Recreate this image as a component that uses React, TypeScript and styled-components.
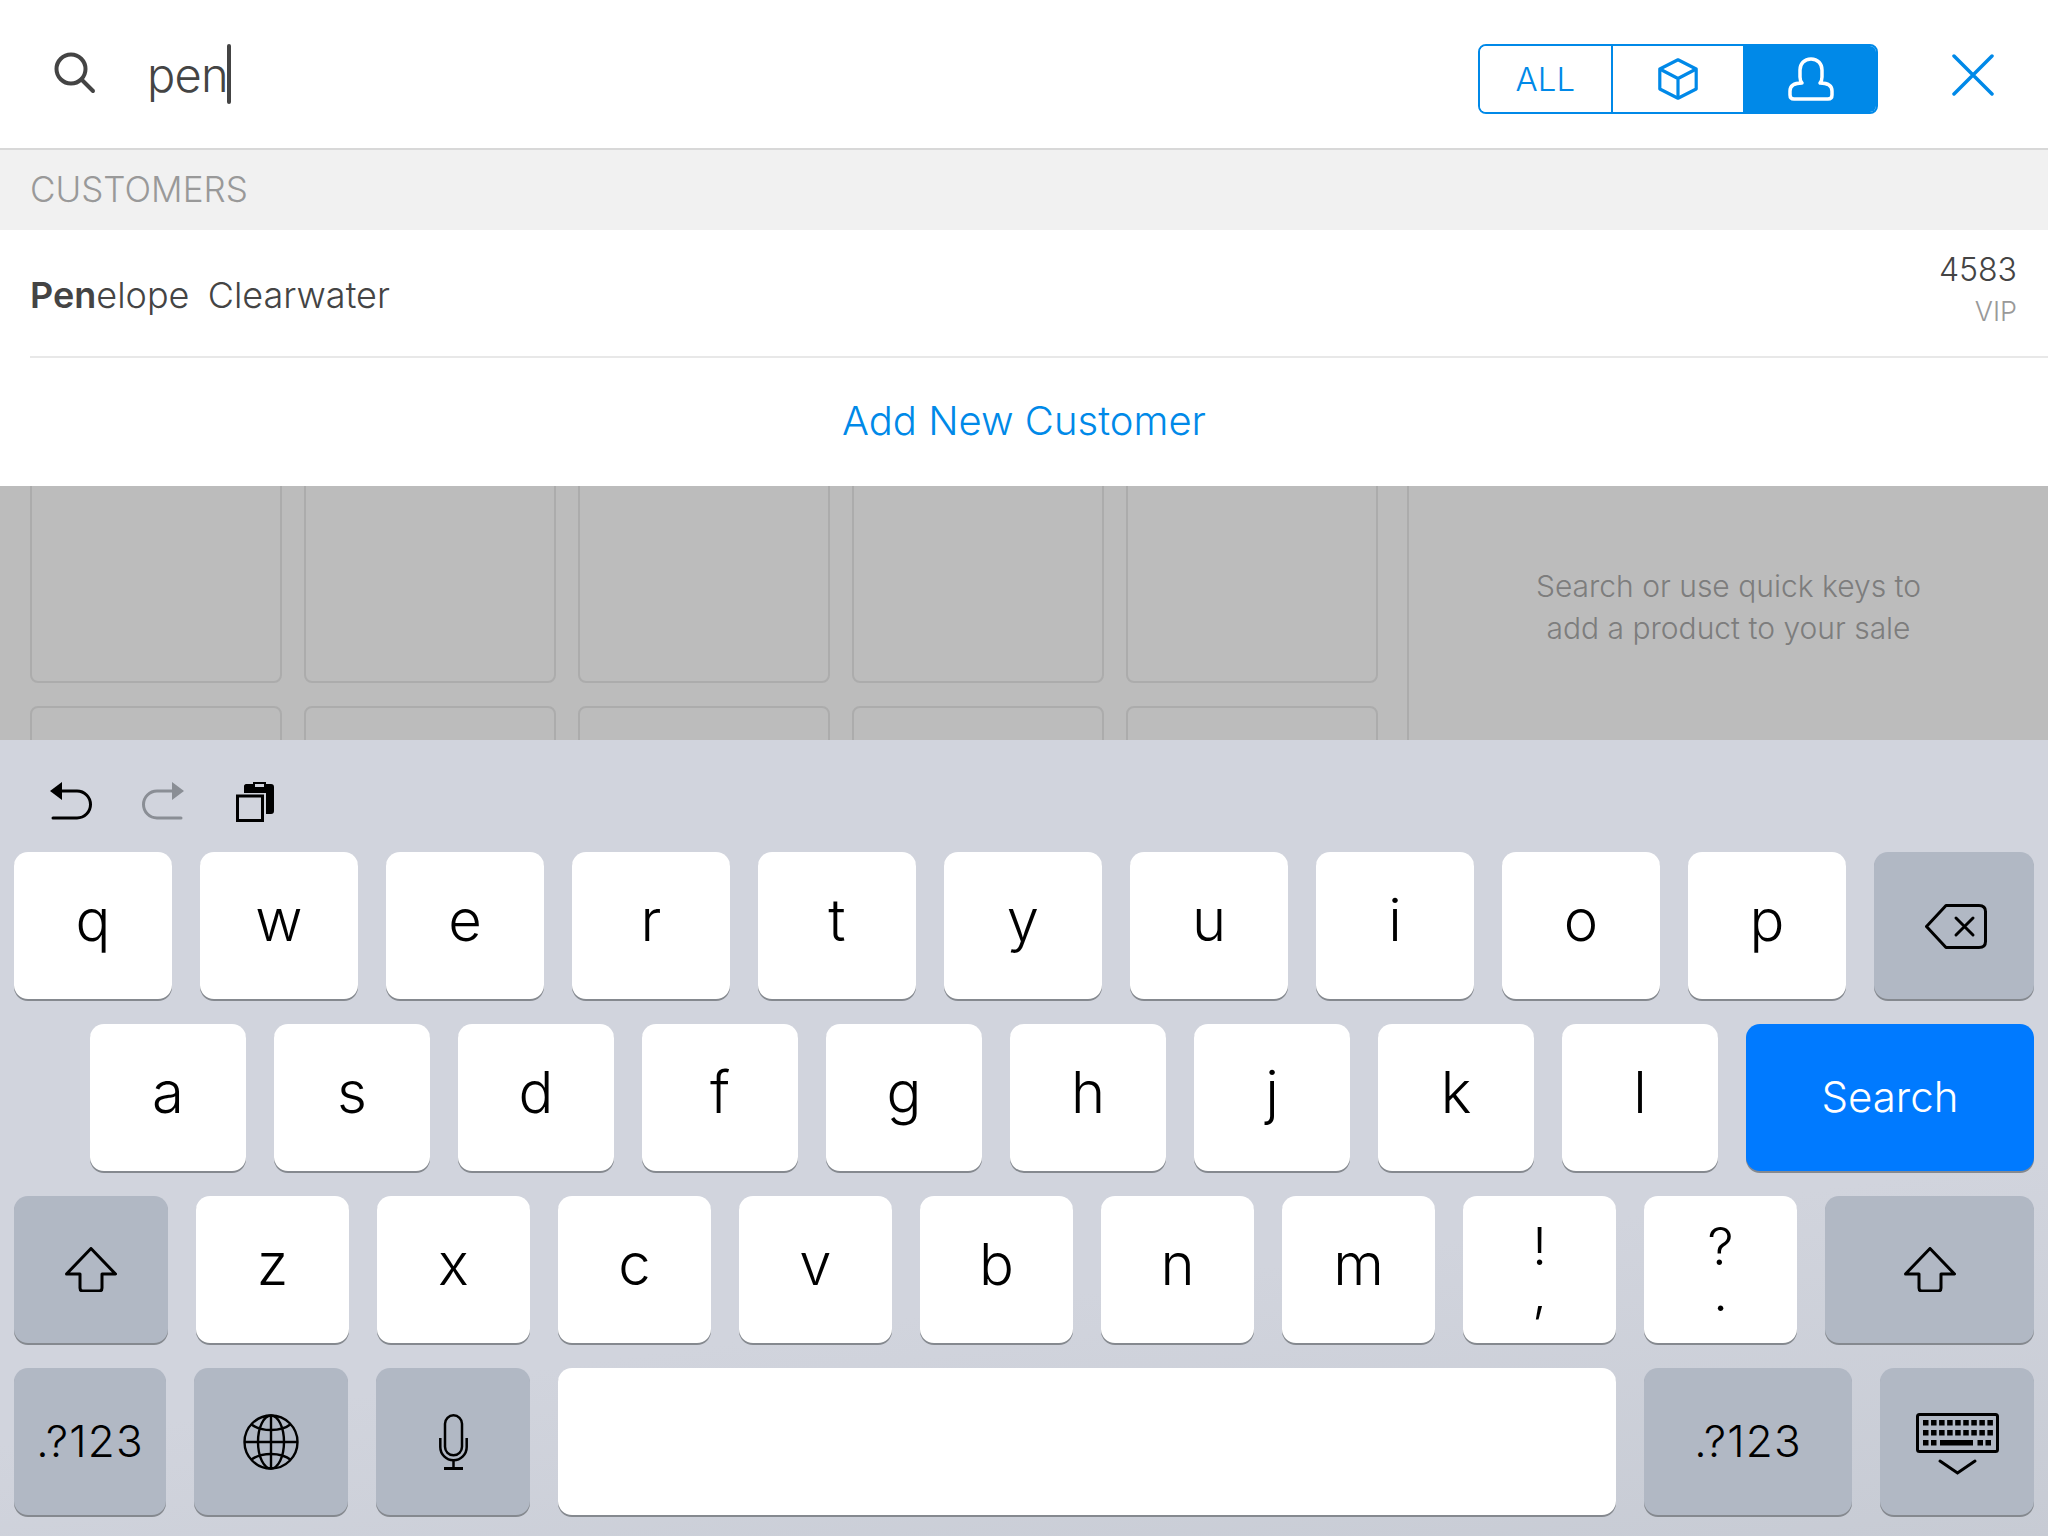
import styled, { createGlobalStyle } from "styled-components";

const BLUE = "#0089e8";

const Global = createGlobalStyle`
  html, body { margin: 0; padding: 0; background: #fff; }
  #root { width: 2048px; height: 1536px; overflow: hidden; }
  * { box-sizing: border-box; }
`;

const Page = styled.div`
  width: 2048px;
  height: 1536px;
  display: flex;
  flex-direction: column;
  font-family: Inter, "Liberation Sans", sans-serif;
`;

/* search header */
const Header = styled.header`
  height: 150px;
  flex: none;
  display: flex;
  align-items: center;
  padding: 0 54px;
  border-bottom: 2px solid #d8d8d8;
`;

const SearchIcon = styled.svg`
  width: 42px;
  height: 42px;
  flex: none;
  margin-top: -2px;
`;

const Query = styled.div`
  margin-left: 51px;
  flex: 1;
  display: flex;
  align-items: center;
  font-size: 47px;
  font-weight: 300;
  color: #444;
  letter-spacing: -0.8px;
`;

const Caret = styled.span`
  display: inline-block;
  width: 4px;
  height: 60px;
  margin-left: -1px;
  background: #444;
  border-radius: 2px;
`;

const Segments = styled.div`
  display: flex;
  width: 400px;
  height: 70px;
  border: 2px solid ${BLUE};
  border-radius: 8px;
  overflow: hidden;
  margin-top: 10px;
`;

const Segment = styled.div<{ $active?: boolean }>`
  flex: 1;
  display: flex;
  align-items: center;
  justify-content: center;
  color: ${BLUE};
  font-size: 33px;
  font-weight: 300;
  background: ${(p) => (p.$active ? BLUE : "#fff")};
  & + & {
    border-left: 2px solid ${BLUE};
  }
`;

const CloseIcon = styled.svg`
  width: 42px;
  height: 42px;
  flex: none;
  margin: 2px 0 0 74px;
`;

/* results */
const SectionBand = styled.div`
  height: 80px;
  flex: none;
  display: flex;
  align-items: center;
  padding: 0 0 2px 30px;
  background: #f1f1f1;
  color: #999;
  font-size: 35px;
  font-weight: 300;
`;

const ResultRow = styled.div`
  height: 128px;
  flex: none;
  margin-left: 30px;
  padding-right: 31px;
  display: flex;
  align-items: center;
  justify-content: space-between;
  border-bottom: 2px solid #e8e8e8;
`;

const ResultName = styled.div`
  font-size: 36px;
  font-weight: 300;
  color: #444;
  padding-top: 3px;
  word-spacing: -1px;
`;

const Match = styled.span`
  font-weight: 600;
`;

const ResultMeta = styled.div`
  display: flex;
  flex-direction: column;
  align-items: flex-end;
  gap: 6px;
  padding-bottom: 9px;
`;

const CustomerCode = styled.div`
  font-size: 32px;
  line-height: 40px;
  font-weight: 300;
  color: #444;
`;

const CustomerGroup = styled.div`
  font-size: 27px;
  line-height: 32px;
  font-weight: 300;
  color: #999;
`;

const AddRow = styled.div`
  height: 128px;
  flex: none;
  display: flex;
  align-items: center;
  justify-content: center;
  padding-bottom: 3px;
  color: ${BLUE};
  font-size: 40px;
  font-weight: 300;
`;

/* dimmed sell screen behind the search */
const Backdrop = styled.div`
  height: 254px;
  flex: none;
  display: flex;
  background: #bcbcbc;
  overflow: hidden;
`;

const QuickKeys = styled.div`
  width: 1409px;
  flex: none;
  padding-left: 30px;
  border-right: 2px solid #acacac;
`;

const TileGrid = styled.div`
  display: grid;
  grid-template-columns: repeat(5, 252px);
  grid-auto-rows: 217px;
  gap: 23px 22px;
  margin-top: -20px;
`;

const Tile = styled.div`
  border: 2px solid #acacac;
  border-radius: 8px;
`;

const Hint = styled.div`
  flex: 1;
  padding: 0 0 12px 0;
  display: flex;
  align-items: center;
  justify-content: center;
  text-align: center;
  font-size: 30px;
  line-height: 42px;
  font-weight: 300;
  color: #7d7d7d;
`;

/* keyboard */
const Keyboard = styled.div`
  flex: 1;
  display: flex;
  flex-direction: column;
  gap: 25px;
  background: linear-gradient(172deg, #d1d4dd 65%, #c7cbd4);
`;

const Toolbar = styled.div`
  height: 87px;
  padding: 42px 0 0 50px;
  display: flex;
  align-items: flex-start;
  gap: 50px;
  flex: none;
`;

const KeyRow = styled.div<{ $inset?: number }>`
  display: flex;
  gap: 28px;
  padding: 0 14px 0 ${(p) => p.$inset ?? 14}px;
  height: 147px;
  flex: none;
`;

type Tone = "light" | "dark" | "blue";
const toneBg: Record<Tone, string> = { light: "#fff", dark: "#b1b8c4", blue: "#007aff" };

const Key = styled.div<{ $tone?: Tone; $w?: number }>`
  ${(p) => (p.$w ? `width: ${p.$w}px; flex: none;` : "flex: 1;")}
  height: 147px;
  display: flex;
  align-items: center;
  justify-content: center;
  border-radius: 14px;
  background: ${(p) => toneBg[p.$tone ?? "light"]};
  box-shadow: 0 2px 0 #85898f;
  color: ${(p) => (p.$tone === "blue" ? "#fff" : "#000")};
`;

const Letter = styled.span`
  font-size: 58px;
  font-weight: 300;
  line-height: 1;
  padding-bottom: 12px;
`;

const Label = styled.span`
  font-size: 42px;
  font-weight: 300;
  padding-bottom: 2px;
`;

const ModeLabel = styled.span`
  font-size: 44px;
  font-weight: 300;
  letter-spacing: 1.2px;
  padding-bottom: 2px;
`;

const StackedKey = styled.div`
  display: flex;
  flex-direction: column;
  align-items: center;
  font-size: 52px;
  line-height: 46px;
  font-weight: 300;
`;

const CopyWrap = styled.div`
  margin-left: 2px;
  display: flex;
`;

const IconNudge = styled.div<{ $x?: number; $y?: number }>`
  display: flex;
  padding: ${(p) => p.$y ?? 0}px 0 0 ${(p) => p.$x ?? 0}px;
`;

const UndoIcon = ({ color = "#000", flip = false }: { color?: string; flip?: boolean }) => (
  <svg width="42" height="38" viewBox="0 0 42 38" style={flip ? { transform: "scaleX(-1)" } : undefined}>
    <path d="M0 9 12 0v18z" fill={color} />
    <path d="M10 9h17a13.5 13.5 0 0 1 0 27H3" fill="none" stroke={color} strokeWidth="3" strokeLinecap="round" />
  </svg>
);

const CopyIcon = () => (
  <svg width="38" height="40" viewBox="0 0 38 40">
    <path d="M8 4c0-1 1-2 2-2h7V0h13v2h5c2 0 3 1 3 3v24c0 2-1 3-3 3h-5V11H8z" fill="#000" />
    <rect x="18.5" y="1.5" width="10" height="4" fill="#d1d4dd" stroke="#000" strokeWidth="1" />
    <rect x="1.5" y="14" width="25" height="24.5" fill="#d1d4dd" stroke="#000" strokeWidth="3" />
  </svg>
);

const ShiftIcon = () => (
  <svg width="52" height="45" viewBox="0 0 52 45">
    <path
      d="M26 1.500 50.500 27H37v14c0 2-1 3-3 3H18c-2 0-3-1-3-3V27H1.500z"
      fill="none"
      stroke="#000"
      strokeWidth="3"
      strokeLinejoin="round"
    />
  </svg>
);

const BackspaceIcon = () => (
  <svg width="62" height="45" viewBox="0 0 62 45">
    <path
      d="M21 1.500h33c4 0 6.500 2 6.500 6v30c0 4-2.500 6-6.500 6H21L1.500 22.500z"
      fill="none"
      stroke="#000"
      strokeWidth="3"
      strokeLinejoin="round"
    />
    <path d="M31 14l17 17M48 14 31 31" stroke="#000" strokeWidth="3" strokeLinecap="round" />
  </svg>
);

const GlobeIcon = () => (
  <svg width="56" height="56" viewBox="0 0 56 56" fill="none" stroke="#000" strokeWidth="2.400">
    <circle cx="28" cy="28" r="26.500" />
    <ellipse cx="28" cy="28" rx="13" ry="26.500" />
    <path d="M28 1.500v53M1.500 28h53" />
    <path d="M8 10c10 8 30 8 40 0M8 46c10-8 30-8 40 0" />
  </svg>
);

const MicIcon = () => (
  <svg width="29" height="56" viewBox="0 0 29 56" fill="none" stroke="#000" strokeWidth="2.500">
    <rect x="6" y="1.300" width="17" height="40" rx="8.500" />
    <path d="M1.300 24v9a13.200 13.200 0 0 0 26.400 0v-9" />
    <path d="M14.500 46v8" />
    <path d="M5 54.500h19" strokeWidth="3" />
  </svg>
);

const HideKeyboardIcon = () => (
  <svg width="83" height="62" viewBox="0 0 83 62">
    <rect x="1.500" y="1.500" width="80" height="37" rx="2" fill="none" stroke="#000" strokeWidth="3" />
    {Array.from({ length: 9 }, (_, i) => (
      <rect key={`a${i}`} x={7 + i * 8.05} y="7" width="5.500" height="5.500" fill="#000" />
    ))}
    {Array.from({ length: 9 }, (_, i) => (
      <rect key={`b${i}`} x={7 + i * 8.05} y="17" width="5.500" height="5.500" fill="#000" />
    ))}
    {[7, 15, 61.5, 69.5].map((x) => (
      <rect key={x} x={x} y="27" width="5.500" height="5.500" fill="#000" />
    ))}
    <rect x="24" y="27" width="33" height="5.500" fill="#000" />
    <path d="M24 48l17.500 12L59 48" fill="none" stroke="#000" strokeWidth="3" strokeLinecap="round" />
  </svg>
);

const rowOne = ["q", "w", "e", "r", "t", "y", "u", "i", "o", "p"];
const rowTwo = ["a", "s", "d", "f", "g", "h", "j", "k", "l"];
const rowThree = ["z", "x", "c", "v", "b", "n", "m"];

export default function App() {
  return (
    <Page>
      <Global />
      <Header>
        <SearchIcon viewBox="0 0 42 42" fill="none" stroke="#444" strokeWidth="4" strokeLinecap="round">
          <circle cx="17" cy="17" r="14.500" />
          <path d="M27.500 27.500 39 39" />
        </SearchIcon>
        <Query>
          pen
          <Caret />
        </Query>
        <Segments>
          <Segment>ALL</Segment>
          <Segment>
            <svg width="40" height="42" viewBox="0 0 40 42" fill="none" stroke={BLUE} strokeWidth="3.200" strokeLinejoin="round">
              <path d="M20 1.800 38.200 11v20L20 40.200 1.800 31V11z" />
              <path d="M1.800 11 20 20.500 38.200 11M20 20.500v19.700" />
            </svg>
          </Segment>
          <Segment $active>
            <svg width="46" height="44" viewBox="0 0 46 44" fill="none" stroke="#fff" strokeWidth="3.500" strokeLinejoin="round">
              <path d="M23 2c7 0 11 5 11 11v7c0 3-1 5-2 6 8 0 12 3 12 8v4c0 3-2 4-4 4H6c-2 0-4-1-4-4v-4c0-5 4-8 12-8-1-1-2-3-2-6v-7C12 7 16 2 23 2z" />
            </svg>
          </Segment>
        </Segments>
        <CloseIcon viewBox="0 0 42 42" stroke={BLUE} strokeWidth="3.500" strokeLinecap="round">
          <path d="M2 2l38 38M40 2 2 40" />
        </CloseIcon>
      </Header>

      <SectionBand>CUSTOMERS</SectionBand>
      <ResultRow>
        <ResultName>
          <Match>Pen</Match>elope&nbsp; Clearwater
        </ResultName>
        <ResultMeta>
          <CustomerCode>4583</CustomerCode>
          <CustomerGroup>VIP</CustomerGroup>
        </ResultMeta>
      </ResultRow>
      <AddRow>Add New Customer</AddRow>

      <Backdrop>
        <QuickKeys>
          <TileGrid>
            {Array.from({ length: 10 }, (_, i) => (
              <Tile key={i} />
            ))}
          </TileGrid>
        </QuickKeys>
        <Hint>
          Search or use quick keys to
          <br />
          add a product to your sale
        </Hint>
      </Backdrop>

      <Keyboard>
        <Toolbar>
          <UndoIcon />
          <UndoIcon color="#8a8e95" flip />
          <CopyWrap>
            <CopyIcon />
          </CopyWrap>
        </Toolbar>
        <KeyRow>
          {rowOne.map((k) => (
            <Key key={k} $w={158}>
              <Letter>{k}</Letter>
            </Key>
          ))}
          <Key $tone="dark">
            <IconNudge $x={4} $y={2}>
              <BackspaceIcon />
            </IconNudge>
          </Key>
        </KeyRow>
        <KeyRow $inset={90}>
          {rowTwo.map((k) => (
            <Key key={k} $w={156}>
              <Letter>{k}</Letter>
            </Key>
          ))}
          <Key $tone="blue">
            <Label>Search</Label>
          </Key>
        </KeyRow>
        <KeyRow>
          <Key $tone="dark" $w={154}>
            <ShiftIcon />
          </Key>
          {rowThree.map((k) => (
            <Key key={k} $w={153}>
              <Letter>{k}</Letter>
            </Key>
          ))}
          <Key $w={153}>
            <StackedKey>
              <span>!</span>
              <span>,</span>
            </StackedKey>
          </Key>
          <Key $w={153}>
            <StackedKey>
              <span>?</span>
              <span>.</span>
            </StackedKey>
          </Key>
          <Key $tone="dark">
            <ShiftIcon />
          </Key>
        </KeyRow>
        <KeyRow>
          <Key $tone="dark" $w={152}>
            <ModeLabel>.?123</ModeLabel>
          </Key>
          <Key $tone="dark" $w={154}>
            <GlobeIcon />
          </Key>
          <Key $tone="dark" $w={154}>
            <MicIcon />
          </Key>
          <Key />
          <Key $tone="dark" $w={208}>
            <ModeLabel>.?123</ModeLabel>
          </Key>
          <Key $tone="dark" $w={154}>
            <IconNudge $y={5}>
              <HideKeyboardIcon />
            </IconNudge>
          </Key>
        </KeyRow>
      </Keyboard>
    </Page>
  );
}
